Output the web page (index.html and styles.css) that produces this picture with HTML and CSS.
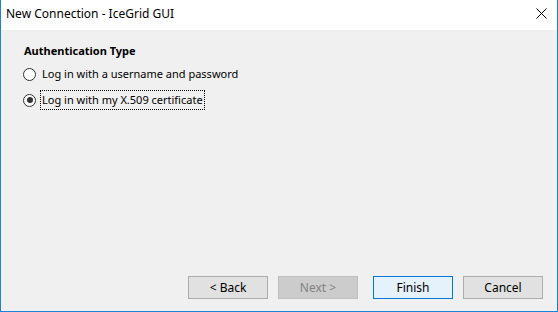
FILE: index.html
```html
<!DOCTYPE html>
<html>
<head>
	<title>New Connection - IceGrid GUI</title>
	<link rel="stylesheet" href="styles.css">
</head>
<body>
	<div class="window">
		<div class="title-bar">
			<span class="title">New Connection - IceGrid GUI</span>
			<span class="close-btn">
				<svg width="11" height="11" viewBox="0 0 11 11"><path d="M0.5 0.5L10.5 10.5M10.5 0.5L0.5 10.5" stroke="#000" stroke-width="1" fill="none"/></svg>
			</span>
		</div>
		<div class="content">
			<div class="heading">Authentication Type</div>
			<label class="option"><span class="radio"></span><span class="label">Log in with a username and password</span></label>
			<label class="option"><span class="radio checked"></span><span class="label focused">Log in with my X.509 certificate</span></label>
		</div>
		<div class="button-row">
			<button class="btn">&lt; Back</button>
			<button class="btn disabled">Next &gt;</button>
			<button class="btn default">Finish</button>
			<button class="btn">Cancel</button>
		</div>
	</div>
</body>
</html>
```

FILE: styles.css
```css
body {
	margin: 0;
	padding: 0;
	font-family: "Noto Sans", "DejaVu Sans", sans-serif;
	font-size: 12px;
	color: #000;
}
.window {
	width: 558px;
	height: 312px;
	box-sizing: border-box;
	border: 1px solid #1883d7;
	border-top: none;
	background-color: #f0f0f0;
	display: flex;
	flex-direction: column;
}
.title-bar {
	height: 30px;
	background-color: #fff;
	display: flex;
	align-items: center;
	justify-content: space-between;
	padding-left: 5px;
	flex-shrink: 0;
}
.title {
	font-size: 12px;
	margin-top: -3px;
}
.close-btn {
	width: 31px;
	display: flex;
	justify-content: center;
	align-items: center;
	margin-top: -3px;
}
.content {
	flex: 1;
	padding: 12px 0 0 22px;
	font-size: 11px;
	display: flex;
	flex-direction: column;
	align-items: flex-start;
}
.heading {
	font-weight: bold;
	margin-left: 1px;
	margin-bottom: 2px;
	line-height: 17px;
}
.option {
	display: flex;
	align-items: center;
	height: 26px;
}
.radio {
	width: 11px;
	height: 11px;
	border: 1px solid #333;
	border-radius: 50%;
	background-color: #fff;
	position: relative;
	margin-right: 4px;
}
.radio.checked::after {
	content: "";
	position: absolute;
	left: 2.5px;
	top: 2.5px;
	width: 6px;
	height: 6px;
	border-radius: 50%;
	background-color: #333;
}
.label {
	padding: 1px;
	border: 1px dotted transparent;
	line-height: 16px;
}
.label.focused {
	border-color: #000;
}
.button-row {
	display: flex;
	justify-content: flex-end;
	gap: 10px;
	padding: 0 14px 12px 0;
}
.btn {
	width: 80px;
	height: 23px;
	font-family: inherit;
	font-size: 12px;
	background-color: #e1e1e1;
	border: 1px solid #adadad;
	color: #000;
	padding: 0;
}
.btn.disabled {
	background-color: #cccccc;
	border-color: #bfbfbf;
	color: #838383;
	margin-right: 5px;
}
.btn.default {
	background-color: #e5f1fb;
	border-color: #0078d7;
}
```
